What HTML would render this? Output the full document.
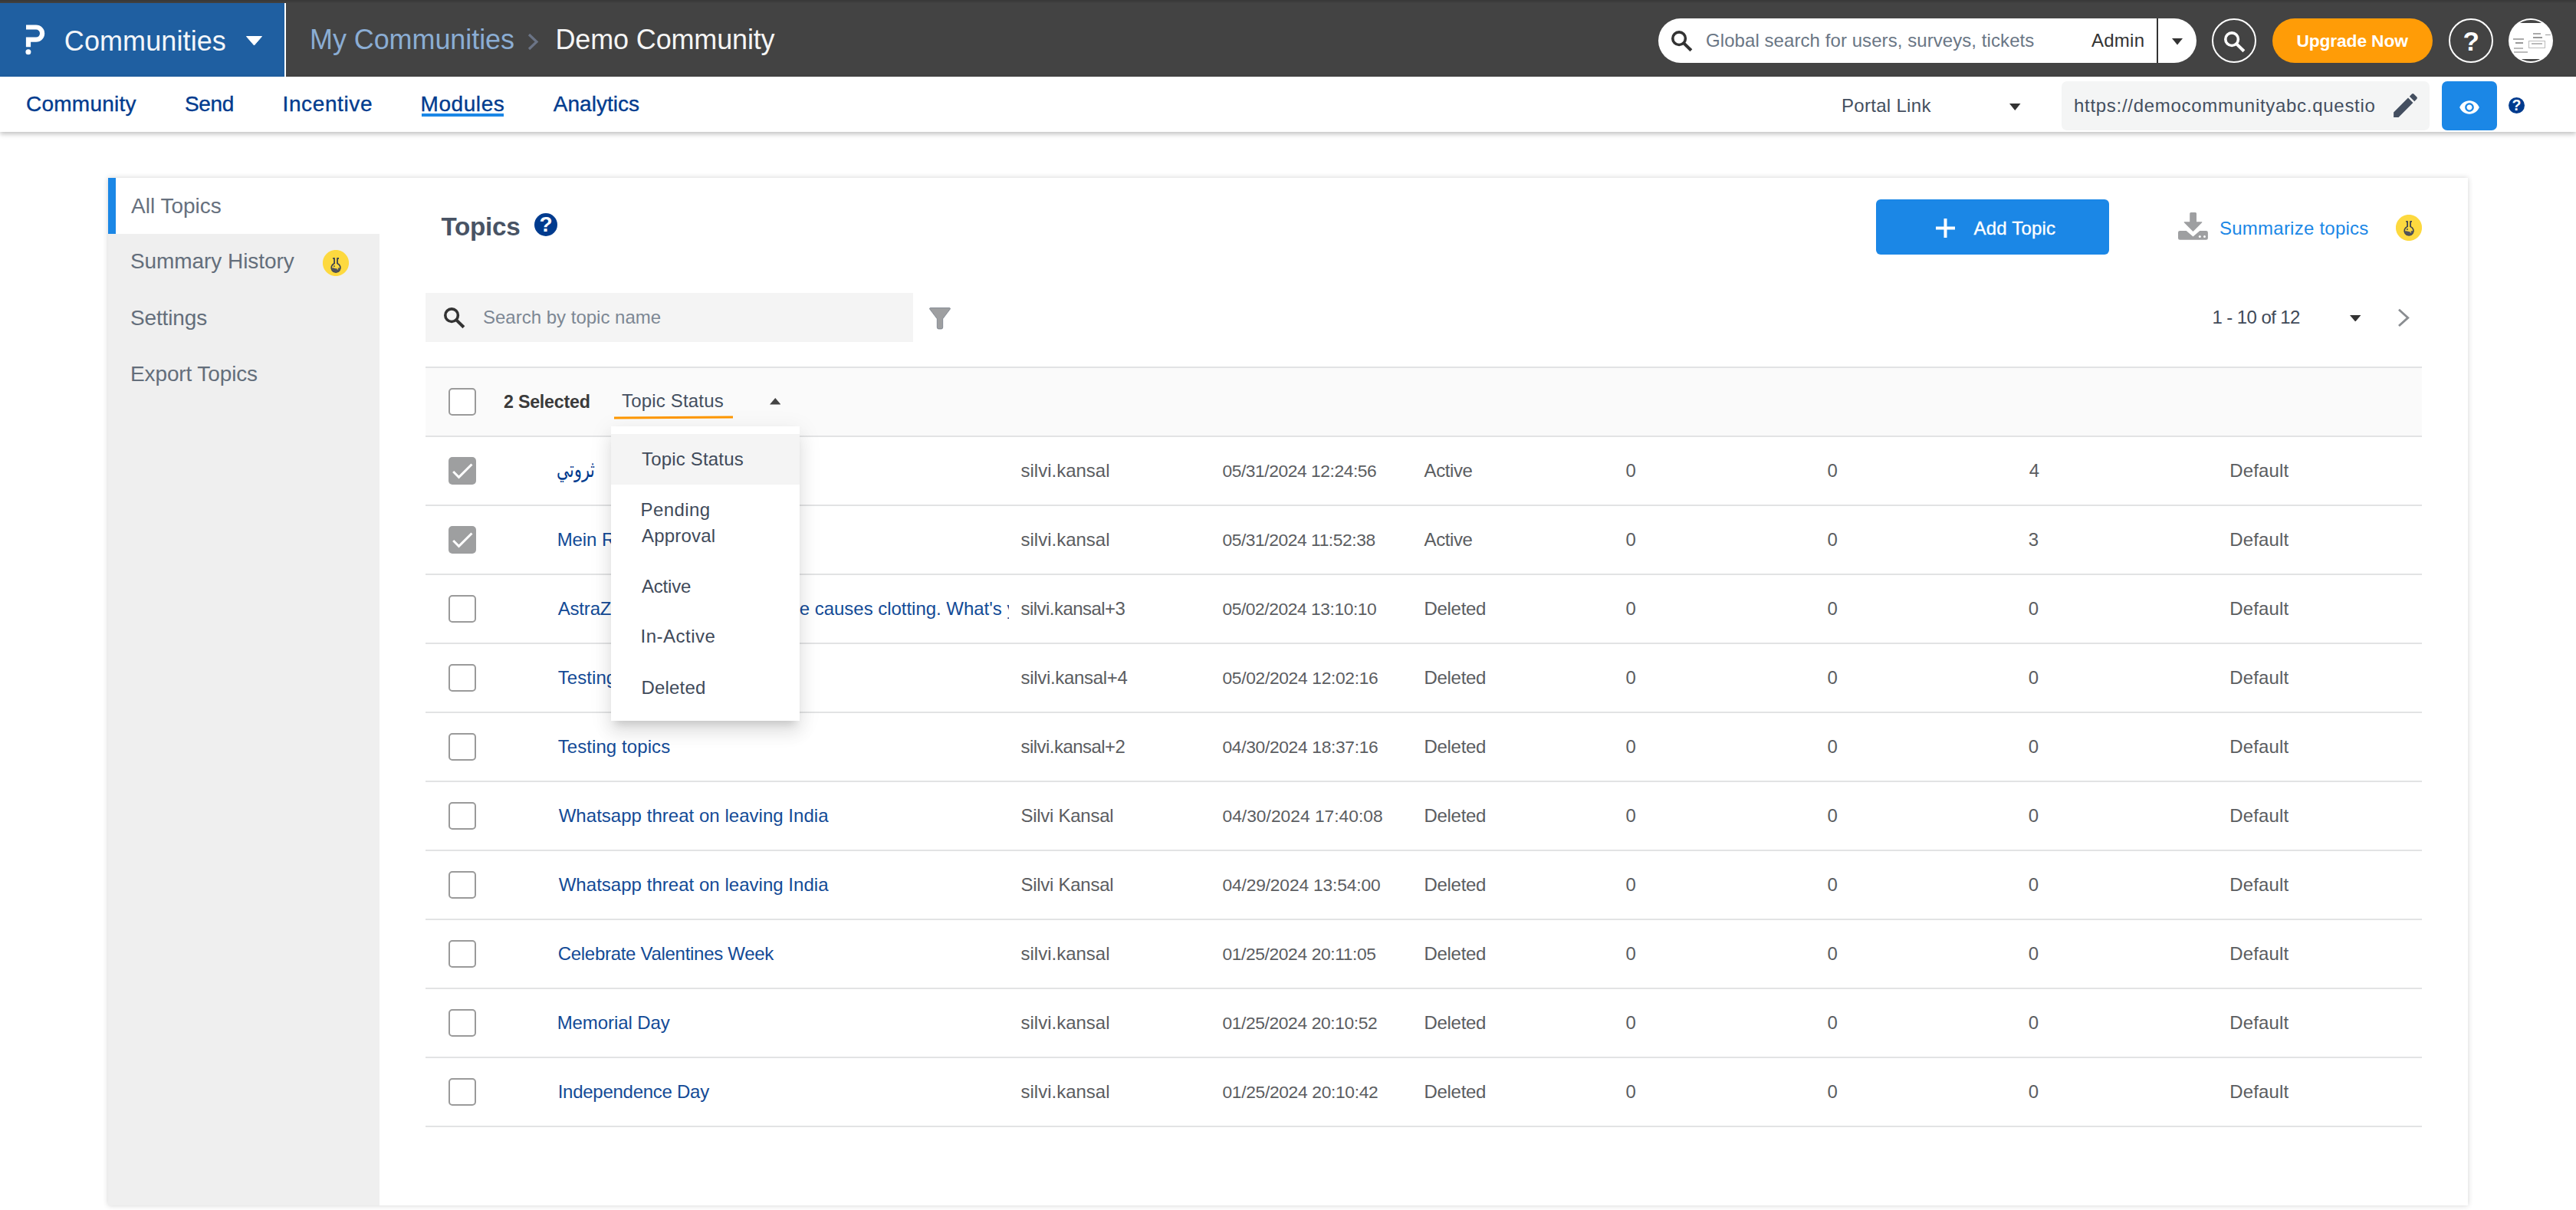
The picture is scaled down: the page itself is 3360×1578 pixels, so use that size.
<!DOCTYPE html>
<html lang="en"><head><meta charset="utf-8"><title>Topics - Demo Community</title><style>
*{margin:0;padding:0}
html,body{width:3360px;height:1578px;overflow:hidden;background:#fff}
@media (max-width:1700px){html{zoom:.5}}
body{position:relative;font-family:"Liberation Sans",sans-serif;font-size:24px;color:#444}
.a,.t{position:absolute;display:block}
.t{white-space:pre;line-height:1;font-weight:400;text-decoration:none}
h1.t{font-weight:700}
i{display:block}
.qc{background:#003b8e;border-radius:50%;color:#fff;font-weight:700;text-align:center}
.cb{width:36px;height:36px;box-sizing:border-box;border:2px solid #9a9a9a;border-radius:5px;background:#fff}
.cb.on{border:0;background:#9e9fa0}
.cb svg{display:block}
.clip{overflow:hidden}
.clip .t{position:absolute}
.ar{font-size:24px;line-height:1;text-decoration:none;white-space:nowrap;transform-origin:0 0;transform:scale(.85,1.2)}
</style></head>
<body>
<header>
<div class="a" style="left:0px;top:0px;width:3360px;height:100px;background:linear-gradient(#383838 0,#3c3c3c 2px,#434343 4px)"></div>
<div class="a" style="left:0px;top:4px;width:371px;height:96px;background:#1f5fa1"></div>
<div class="a" style="left:371px;top:4px;width:2px;height:96px;background:#fff"></div>
<svg class="a" style="left:30px;top:28px" width="34" height="46" viewBox="30 28 34 46" ><path d="M34 35.5H47A8.1 8.1 0 0 1 47 51.7H37V61.2" fill="none" stroke="#fff" stroke-width="6.2"/><circle cx="36.9" cy="67.7" r="3.5" fill="#fff"/></svg>
<span class="t" style="left:83.8px;top:36px;font-size:36.0px;letter-spacing:0.10px;opacity:0.95;color:#fff;">Communities</span>
<svg class="a" style="left:320px;top:47px" width="23" height="13" viewBox="0 0 23 13" ><path d="M1.5 0.5H21.5L11.5 12Z" fill="#fff" stroke="#fff" stroke-width="1" stroke-linejoin="round"/></svg>
<span class="t" style="left:404.0px;top:34px;font-size:36.0px;letter-spacing:-0.08px;opacity:0.95;color:#8fb3dc;">My Communities</span>
<svg class="a" style="left:686px;top:42px" width="18" height="26" viewBox="0 0 18 26" ><path d="M4 3 L14 12.5 L4 22" fill="none" stroke="#6b7486" stroke-width="3.2"/></svg>
<span class="t" style="left:724.5px;top:34px;font-size:36.0px;letter-spacing:-0.15px;opacity:0.95;color:#fff;">Demo Community</span>
<div class="a" style="left:2163px;top:24px;width:702px;height:58px;background:#fff;border-radius:29px"></div>
<svg class="a" style="left:2179.5px;top:40px" width="28" height="28" viewBox="0 0 28 28" ><circle cx="10.100" cy="10.200" r="8.300" fill="none" stroke="#333" stroke-width="3.600"/><path d="M15.300 15.400L25.900 25.800" stroke="#333" stroke-width="4.100"/></svg>
<span class="t" style="left:2225.0px;top:41px;font-size:24.0px;letter-spacing:0.07px;color:#6a7685;">Global search for users, surveys, tickets</span>
<span class="t" style="left:2728.0px;top:41px;font-size:24.0px;letter-spacing:0.25px;color:#333;">Admin</span>
<div class="a" style="left:2813px;top:24px;width:2px;height:58px;background:#333"></div>
<svg class="a" style="left:2833px;top:50px" width="14" height="8.5" viewBox="0 0 14 8.5" ><path d="M0 0H14L7.0 8.5Z" fill="#333"/></svg>
<div class="a" style="left:2885px;top:24px;width:58px;height:58px;border:2px solid #fff;border-radius:50%;box-sizing:border-box"></div>
<svg class="a" style="left:2901px;top:40.5px" width="28" height="28" viewBox="0 0 28 28" ><circle cx="10.100" cy="10.200" r="8.300" fill="none" stroke="#fff" stroke-width="3.600"/><path d="M15.300 15.400L25.900 25.800" stroke="#fff" stroke-width="4.100"/></svg>
<div class="a" style="left:2964px;top:24px;width:209px;height:58px;background:#ff9c07;border-radius:29px"></div>
<span class="t" style="left:2995.5px;top:42px;font-size:22.8px;font-weight:700;letter-spacing:-0.15px;color:#fff;">Upgrade Now</span>
<div class="a" style="left:3194px;top:24px;width:58px;height:58px;border:2px solid #fff;border-radius:50%;box-sizing:border-box"></div>
<span class="t" style="left:3212.5px;top:36px;font-size:35.0px;font-weight:700;color:#fff;">?</span>
<div class="a" style="left:3272px;top:24px;width:58px;height:58px;background:#fff;border-radius:50%"><div style="position:absolute;left:2px;top:2px;width:54px;height:54px;border-radius:50%;overflow:hidden;background:#fff"><i style="position:absolute;left:0;top:0;width:54px;height:3.500px;background:#444"></i><i style="position:absolute;left:0;top:50.500px;width:54px;height:3.500px;background:#444"></i><i style="position:absolute;left:30px;top:17px;width:10px;height:2px;background:#aaa"></i><i style="position:absolute;left:30px;top:22px;width:12px;height:2px;background:#999"></i><i style="position:absolute;left:4px;top:24px;width:14px;height:2px;background:#aaa"></i><i style="position:absolute;left:7px;top:29px;width:10px;height:2px;background:#999"></i><i style="position:absolute;left:24px;top:27px;width:22px;height:10px;border:1px solid #bbb;box-sizing:border-box"></i><i style="position:absolute;left:28px;top:30px;width:14px;height:2px;background:#bbb"></i><i style="position:absolute;left:5px;top:36px;width:12px;height:2px;background:#bbb"></i><i style="position:absolute;left:5px;top:41px;width:18px;height:2px;background:#bbb"></i><i style="position:absolute;left:46px;top:19px;width:8px;height:1px;background:#999"></i></div></div>
</header>
<nav>
<div class="a" style="left:0px;top:100px;width:3360px;height:72px;background:#fff;box-shadow:0 3px 6px rgba(0,0,0,.24)"></div>
<a class="t" style="left:34.0px;top:122px;font-size:28.0px;letter-spacing:0.25px;color:#003b8e;-webkit-text-stroke:0.35px currentColor;">Community</a>
<a class="t" style="left:241.0px;top:122px;font-size:28.0px;letter-spacing:-0.33px;color:#003b8e;-webkit-text-stroke:0.35px currentColor;">Send</a>
<a class="t" style="left:368.5px;top:122px;font-size:28.0px;letter-spacing:0.62px;color:#003b8e;-webkit-text-stroke:0.35px currentColor;">Incentive</a>
<a class="t" style="left:548.5px;top:122px;font-size:28.0px;letter-spacing:0.58px;color:#003b8e;-webkit-text-stroke:0.35px currentColor;">Modules</a>
<div class="a" style="left:550px;top:148px;width:107px;height:4px;background:#1b87e6"></div>
<a class="t" style="left:721.8px;top:122px;font-size:28.0px;letter-spacing:0.03px;color:#003b8e;-webkit-text-stroke:0.35px currentColor;">Analytics</a>
<span class="t" style="left:2402.0px;top:126px;font-size:24.0px;letter-spacing:0.30px;color:#444f60;">Portal Link</span>
<svg class="a" style="left:2621px;top:135px" width="14.5" height="9" viewBox="0 0 14.5 9" ><path d="M0 0H14.5L7.25 9Z" fill="#333"/></svg>
<div class="a" style="left:2689px;top:106px;width:480px;height:64px;background:#f4f5f5;border-radius:7px"></div>
<span class="t" style="left:2705.0px;top:126px;font-size:24.0px;letter-spacing:0.71px;color:#444f60;">https://democommunityabc.questio</span>
<svg class="a" style="left:3116.5px;top:117.2px" width="41" height="41" viewBox="0 0 24 24" ><path d="M3 17.25V21h3.75L17.81 9.94l-3.75-3.75L3 17.25zM20.71 7.04c.39-.39.39-1.02 0-1.41l-2.34-2.34c-.39-.39-1.02-.39-1.41 0l-1.83 1.83 3.75 3.75 1.83-1.83z" fill="#444f60"/></svg>
<div class="a" style="left:3185px;top:106px;width:72px;height:64px;background:#1b87e6;border-radius:7px"></div>
<svg class="a" style="left:3207.4px;top:126px" width="28" height="28" viewBox="0 0 24 24" ><path d="M12 4.5C7 4.5 2.73 7.61 1 12c1.73 4.39 6 7.5 11 7.5s9.27-3.11 11-7.5c-1.73-4.39-6-7.5-11-7.5zM12 17c-2.76 0-5-2.24-5-5s2.24-5 5-5 5 2.24 5 5-2.24 5-5 5zm0-8c-1.66 0-3 1.34-3 3s1.34 3 3 3 3-1.34 3-3-1.34-3-3-3z" fill="#fff"/></svg>
<div class="a qc" style="left:3272.0px;top:127.25px;width:21px;height:21px;line-height:21px;font-size:19.5px">?</div>
</nav>
<section>
<div class="a" style="left:141px;top:232px;width:3078px;height:1340px;background:#fff;box-shadow:0 0 7px rgba(0,0,0,.18)"></div>
<aside>
<div class="a" style="left:141px;top:305px;width:354px;height:1267px;background:#efefef"></div>
<div class="a" style="left:141px;top:232px;width:10px;height:73px;background:#1b87e6"></div>
<a class="t" style="left:171.0px;top:255px;font-size:28.0px;opacity:0.86;color:#4d5969;">All Topics</a>
<a class="t" style="left:170.0px;top:327px;font-size:28.0px;letter-spacing:-0.07px;opacity:0.86;color:#4d5969;">Summary History</a>
<svg class="a" style="left:421px;top:326px" width="34" height="34" viewBox="0 0 34 34" ><circle cx="17" cy="17" r="17.100" fill="#fdd93f"/><g transform="translate(0 10.3)"><path d="M15.100 0V7.800M19.050 0V7.800M13.200 .7H15.100M19.050 .7H21" stroke="#3e4450" stroke-width="1.800" fill="none"/><path d="M15.100 7.300A5.900 5.900 0 1 0 19.050 7.300" fill="none" stroke="#3e4450" stroke-width="1.700"/><path d="M11.200 13.400Q13.500 12.500 16 13.600T20.500 12.900L22.900 13.400A5.900 5.900 0 0 1 11.200 13.400Z" fill="#50535a"/><circle cx="14.900" cy="10.800" r=".95" fill="#3e4450"/><circle cx="19.300" cy="14.400" r=".9" fill="#fdd93f"/></g></svg>
<a class="t" style="left:170.0px;top:401px;font-size:28.0px;letter-spacing:-0.14px;opacity:0.86;color:#4d5969;">Settings</a>
<a class="t" style="left:170.0px;top:474px;font-size:28.0px;letter-spacing:-0.12px;opacity:0.86;color:#4d5969;">Export Topics</a>
</aside>
<main>
<h1 class="t" style="left:575.5px;top:279px;font-size:33.25px;font-weight:700;letter-spacing:-0.30px;color:#485364;">Topics</h1>
<div class="a qc" style="left:697.0px;top:278.0px;width:30px;height:30px;line-height:30px;font-size:28px">?</div>
<div class="a" style="left:2447px;top:260px;width:304px;height:72px;background:#1b87e6;border-radius:6px"></div>
<svg class="a" style="left:2525px;top:285px" width="25" height="25" viewBox="0 0 25 25" ><path d="M12.5 0V25M0 12.5H25" stroke="#fff" stroke-width="4"/></svg>
<span class="t" style="left:2574.5px;top:286px;font-size:24.0px;letter-spacing:0.19px;color:#fff;-webkit-text-stroke:0.35px currentColor;">Add Topic</span>
<svg class="a" style="left:2840px;top:276px" width="41" height="38" viewBox="2840 276 41 38" ><path d="M2856.200 278.400a1.500 1.500 0 0 1 1.500-1.500h5.800a1.500 1.500 0 0 1 1.500 1.500V289.200H2871.800a.6.6 0 0 1 .4 1L2861 301.400a.7.7 0 0 1-1 0L2848.800 290.200a.6.6 0 0 1 .4-1H2856.200Z" fill="#9e9fa1"/><path d="M2843.300 301H2851.700L2860.500 308.400L2869.300 301H2877.600a2.300 2.300 0 0 1 2.300 2.300V310.500a2.300 2.300 0 0 1-2.300 2.300H2843.300a2.300 2.300 0 0 1-2.300-2.300V303.300a2.300 2.300 0 0 1 2.300-2.300Z" fill="#9e9fa1"/><circle cx="2869.300" cy="308.600" r="1.500" fill="#fff"/><circle cx="2875.500" cy="308.600" r="1.500" fill="#fff"/></svg>
<a class="t" style="left:2895.0px;top:286px;font-size:24.0px;letter-spacing:0.24px;color:#1b87e6;">Summarize topics</a>
<svg class="a" style="left:3125px;top:280px" width="34" height="34" viewBox="0 0 34 34" ><circle cx="17" cy="17" r="17.100" fill="#fdd93f"/><g transform="translate(0 8.2)"><path d="M15.100 0V7.800M19.050 0V7.800M13.200 .7H15.100M19.050 .7H21" stroke="#3e4450" stroke-width="1.800" fill="none"/><path d="M15.100 7.300A5.900 5.900 0 1 0 19.050 7.300" fill="none" stroke="#3e4450" stroke-width="1.700"/><path d="M11.200 13.400Q13.500 12.500 16 13.600T20.500 12.900L22.900 13.400A5.900 5.900 0 0 1 11.200 13.400Z" fill="#50535a"/><circle cx="14.900" cy="10.800" r=".95" fill="#3e4450"/><circle cx="19.300" cy="14.400" r=".9" fill="#fdd93f"/></g></svg>
<div class="a" style="left:555px;top:382px;width:636px;height:64px;background:#f4f4f4"></div>
<svg class="a" style="left:578.75px;top:400.5px" width="28" height="28" viewBox="0 0 28 28" ><circle cx="10.100" cy="10.200" r="8.300" fill="none" stroke="#333" stroke-width="3.600"/><path d="M15.300 15.400L25.900 25.800" stroke="#333" stroke-width="4.100"/></svg>
<span class="t" style="left:630.0px;top:402px;font-size:24.0px;opacity:0.86;color:#6a7685;">Search by topic name</span>
<svg class="a" style="left:1211px;top:400px" width="30" height="30" viewBox="0 0 30 30" ><path d="M2.500 1.500H27.500a1 1 0 0 1 .8 1.600L18.700 15.800V27a2 2 0 0 1-2 2h-3.400a2 2 0 0 1-2-2V15.800L1.700 3.100a1 1 0 0 1 .8-1.600z" fill="#9e9fa1" stroke="#6a7380" stroke-width=".7"/></svg>
<span class="t" style="left:2885.5px;top:402px;font-size:24.0px;letter-spacing:-0.59px;color:#3f4958;">1 - 10 of 12</span>
<svg class="a" style="left:3064.5px;top:410.5px" width="14.5" height="8.5" viewBox="0 0 14.5 8.5" ><path d="M0 0H14.5L7.25 8.5Z" fill="#333"/></svg>
<svg class="a" style="left:3124px;top:400px" width="24" height="30" viewBox="0 0 24 30" ><path d="M5 3.800 L16.800 14.400 L5 25" fill="none" stroke="#8a8d91" stroke-width="2.800"/></svg>
<div class="a" style="left:555px;top:478px;width:2604px;height:2px;background:#e2e3e4"></div>
<div class="a" style="left:555px;top:480px;width:2604px;height:88px;background:#fafafa"></div>
<div class="a" style="left:555px;top:568px;width:2604px;height:2px;background:#e2e3e4"></div>
<span class="a cb" style="left:585px;top:506px"></span>
<span class="t" style="left:657.0px;top:513px;font-size:23.28px;font-weight:700;letter-spacing:-0.25px;color:#3a3a3a;">2 Selected</span>
<span class="t" style="left:811.0px;top:511px;font-size:24.0px;letter-spacing:0.18px;color:#444f60;">Topic Status</span>
<div class="a" style="left:801px;top:543px;width:155px;height:3.2px;background:#ff9800;transform:skewY(-.45deg)"></div>
<svg class="a" style="left:1003.75px;top:519px" width="14.5" height="8.5" viewBox="0 0 14.5 8.5" ><path d="M0 8.5H14.5L7.25 0Z" fill="#444"/></svg>
<div class="row">
<span class="a cb on" style="left:585px;top:596px"><svg width="36" height="36" viewBox="0 0 24 24"><path d="M9 16.17L4.83 12l-1.42 1.41L9 19 21 7l-1.41-1.41z" fill="#fff"/></svg></span>
<a class="a ar" style="left:726.2px;top:598.4px;color:#003b8e" dir="rtl">ثروتي</a>
<span class="t" style="left:1331.5px;top:602px;font-size:24.0px;opacity:0.86;color:#414347;">silvi.kansal</span>
<span class="t" style="left:1594.5px;top:603px;font-size:22.8px;letter-spacing:-0.44px;opacity:0.86;color:#414347;">05/31/2024 12:24:56</span>
<span class="t" style="left:1857.6px;top:602px;font-size:24.0px;letter-spacing:-0.40px;opacity:0.86;color:#414347;">Active</span>
<span class="t" style="left:2120.6px;top:602px;font-size:24.0px;opacity:0.86;color:#414347;">0</span>
<span class="t" style="left:2383.6px;top:602px;font-size:24.0px;opacity:0.86;color:#414347;">0</span>
<span class="t" style="left:2646.8px;top:602px;font-size:24.0px;opacity:0.86;color:#414347;">4</span>
<span class="t" style="left:2908.2px;top:602px;font-size:24.0px;letter-spacing:0.17px;opacity:0.86;color:#414347;">Default</span>
<div class="a" style="left:555px;top:658px;width:2604px;height:2px;background:#e2e3e4"></div>
</div>
<div class="row">
<span class="a cb on" style="left:585px;top:686px"><svg width="36" height="36" viewBox="0 0 24 24"><path d="M9 16.17L4.83 12l-1.42 1.41L9 19 21 7l-1.41-1.41z" fill="#fff"/></svg></span>
<a class="t" style="left:726.7px;top:692px;font-size:24.0px;letter-spacing:-0.08px;opacity:0.92;color:#003b8e;">Mein Reichtum</a>
<span class="t" style="left:1331.5px;top:692px;font-size:24.0px;opacity:0.86;color:#414347;">silvi.kansal</span>
<span class="t" style="left:1594.5px;top:693px;font-size:22.8px;letter-spacing:-0.44px;opacity:0.86;color:#414347;">05/31/2024 11:52:38</span>
<span class="t" style="left:1857.6px;top:692px;font-size:24.0px;letter-spacing:-0.40px;opacity:0.86;color:#414347;">Active</span>
<span class="t" style="left:2120.6px;top:692px;font-size:24.0px;opacity:0.86;color:#414347;">0</span>
<span class="t" style="left:2383.6px;top:692px;font-size:24.0px;opacity:0.86;color:#414347;">0</span>
<span class="t" style="left:2645.8px;top:692px;font-size:24.0px;opacity:0.86;color:#414347;">3</span>
<span class="t" style="left:2908.2px;top:692px;font-size:24.0px;letter-spacing:0.17px;opacity:0.86;color:#414347;">Default</span>
<div class="a" style="left:555px;top:748px;width:2604px;height:2px;background:#e2e3e4"></div>
</div>
<div class="row">
<span class="a cb" style="left:585px;top:776px"></span>
<a class="a clip" style="left:700px;top:760px;width:616px;height:68px">
<span class="t" style="left:727.7px;top:782px;font-size:24.0px;letter-spacing:-0.18px;opacity:0.92;color:#003b8e;margin-left:-700px;margin-top:-760px;">AstraZeneca admits its vaccin</span>
<span class="t" style="left:1042.8px;top:782px;font-size:24.0px;letter-spacing:-0.03px;opacity:0.92;color:#003b8e;margin-left:-700px;margin-top:-760px;">e causes clotting. What's your opinion?</span>
</a>
<span class="t" style="left:1331.5px;top:782px;font-size:24.0px;letter-spacing:-0.54px;opacity:0.86;color:#414347;">silvi.kansal+3</span>
<span class="t" style="left:1594.5px;top:783px;font-size:22.8px;letter-spacing:-0.44px;opacity:0.86;color:#414347;">05/02/2024 13:10:10</span>
<span class="t" style="left:1857.6px;top:782px;font-size:24.0px;letter-spacing:-0.33px;opacity:0.86;color:#414347;">Deleted</span>
<span class="t" style="left:2120.6px;top:782px;font-size:24.0px;opacity:0.86;color:#414347;">0</span>
<span class="t" style="left:2383.6px;top:782px;font-size:24.0px;opacity:0.86;color:#414347;">0</span>
<span class="t" style="left:2645.8px;top:782px;font-size:24.0px;opacity:0.86;color:#414347;">0</span>
<span class="t" style="left:2908.2px;top:782px;font-size:24.0px;letter-spacing:0.17px;opacity:0.86;color:#414347;">Default</span>
<div class="a" style="left:555px;top:838px;width:2604px;height:2px;background:#e2e3e4"></div>
</div>
<div class="row">
<span class="a cb" style="left:585px;top:866px"></span>
<a class="t" style="left:727.7px;top:872px;font-size:24.0px;letter-spacing:0.08px;opacity:0.92;color:#003b8e;">Testing topics</a>
<span class="t" style="left:1331.5px;top:872px;font-size:24.0px;letter-spacing:-0.31px;opacity:0.86;color:#414347;">silvi.kansal+4</span>
<span class="t" style="left:1594.5px;top:873px;font-size:22.8px;letter-spacing:-0.33px;opacity:0.86;color:#414347;">05/02/2024 12:02:16</span>
<span class="t" style="left:1857.6px;top:872px;font-size:24.0px;letter-spacing:-0.33px;opacity:0.86;color:#414347;">Deleted</span>
<span class="t" style="left:2120.6px;top:872px;font-size:24.0px;opacity:0.86;color:#414347;">0</span>
<span class="t" style="left:2383.6px;top:872px;font-size:24.0px;opacity:0.86;color:#414347;">0</span>
<span class="t" style="left:2645.8px;top:872px;font-size:24.0px;opacity:0.86;color:#414347;">0</span>
<span class="t" style="left:2908.2px;top:872px;font-size:24.0px;letter-spacing:0.17px;opacity:0.86;color:#414347;">Default</span>
<div class="a" style="left:555px;top:928px;width:2604px;height:2px;background:#e2e3e4"></div>
</div>
<div class="row">
<span class="a cb" style="left:585px;top:956px"></span>
<a class="t" style="left:727.7px;top:962px;font-size:24.0px;letter-spacing:0.08px;opacity:0.92;color:#003b8e;">Testing topics</a>
<span class="t" style="left:1331.5px;top:962px;font-size:24.0px;letter-spacing:-0.54px;opacity:0.86;color:#414347;">silvi.kansal+2</span>
<span class="t" style="left:1594.5px;top:963px;font-size:22.8px;letter-spacing:-0.33px;opacity:0.86;color:#414347;">04/30/2024 18:37:16</span>
<span class="t" style="left:1857.6px;top:962px;font-size:24.0px;letter-spacing:-0.33px;opacity:0.86;color:#414347;">Deleted</span>
<span class="t" style="left:2120.6px;top:962px;font-size:24.0px;opacity:0.86;color:#414347;">0</span>
<span class="t" style="left:2383.6px;top:962px;font-size:24.0px;opacity:0.86;color:#414347;">0</span>
<span class="t" style="left:2645.8px;top:962px;font-size:24.0px;opacity:0.86;color:#414347;">0</span>
<span class="t" style="left:2908.2px;top:962px;font-size:24.0px;letter-spacing:0.17px;opacity:0.86;color:#414347;">Default</span>
<div class="a" style="left:555px;top:1018px;width:2604px;height:2px;background:#e2e3e4"></div>
</div>
<div class="row">
<span class="a cb" style="left:585px;top:1046px"></span>
<a class="t" style="left:728.7px;top:1052px;font-size:24.0px;letter-spacing:0.03px;opacity:0.92;color:#003b8e;">Whatsapp threat on leaving India</a>
<span class="t" style="left:1331.5px;top:1052px;font-size:24.0px;letter-spacing:-0.27px;opacity:0.86;color:#414347;">Silvi Kansal</span>
<span class="t" style="left:1594.5px;top:1053px;font-size:22.8px;opacity:0.86;color:#414347;">04/30/2024 17:40:08</span>
<span class="t" style="left:1857.6px;top:1052px;font-size:24.0px;letter-spacing:-0.33px;opacity:0.86;color:#414347;">Deleted</span>
<span class="t" style="left:2120.6px;top:1052px;font-size:24.0px;opacity:0.86;color:#414347;">0</span>
<span class="t" style="left:2383.6px;top:1052px;font-size:24.0px;opacity:0.86;color:#414347;">0</span>
<span class="t" style="left:2645.8px;top:1052px;font-size:24.0px;opacity:0.86;color:#414347;">0</span>
<span class="t" style="left:2908.2px;top:1052px;font-size:24.0px;letter-spacing:0.17px;opacity:0.86;color:#414347;">Default</span>
<div class="a" style="left:555px;top:1108px;width:2604px;height:2px;background:#e2e3e4"></div>
</div>
<div class="row">
<span class="a cb" style="left:585px;top:1136px"></span>
<a class="t" style="left:728.7px;top:1142px;font-size:24.0px;letter-spacing:0.03px;opacity:0.92;color:#003b8e;">Whatsapp threat on leaving India</a>
<span class="t" style="left:1331.5px;top:1142px;font-size:24.0px;letter-spacing:-0.27px;opacity:0.86;color:#414347;">Silvi Kansal</span>
<span class="t" style="left:1594.5px;top:1143px;font-size:22.8px;letter-spacing:-0.17px;opacity:0.86;color:#414347;">04/29/2024 13:54:00</span>
<span class="t" style="left:1857.6px;top:1142px;font-size:24.0px;letter-spacing:-0.33px;opacity:0.86;color:#414347;">Deleted</span>
<span class="t" style="left:2120.6px;top:1142px;font-size:24.0px;opacity:0.86;color:#414347;">0</span>
<span class="t" style="left:2383.6px;top:1142px;font-size:24.0px;opacity:0.86;color:#414347;">0</span>
<span class="t" style="left:2645.8px;top:1142px;font-size:24.0px;opacity:0.86;color:#414347;">0</span>
<span class="t" style="left:2908.2px;top:1142px;font-size:24.0px;letter-spacing:0.17px;opacity:0.86;color:#414347;">Default</span>
<div class="a" style="left:555px;top:1198px;width:2604px;height:2px;background:#e2e3e4"></div>
</div>
<div class="row">
<span class="a cb" style="left:585px;top:1226px"></span>
<a class="t" style="left:727.7px;top:1232px;font-size:24.0px;letter-spacing:-0.29px;opacity:0.92;color:#003b8e;">Celebrate Valentines Week</a>
<span class="t" style="left:1331.5px;top:1232px;font-size:24.0px;opacity:0.86;color:#414347;">silvi.kansal</span>
<span class="t" style="left:1594.5px;top:1233px;font-size:22.8px;letter-spacing:-0.39px;opacity:0.86;color:#414347;">01/25/2024 20:11:05</span>
<span class="t" style="left:1857.6px;top:1232px;font-size:24.0px;letter-spacing:-0.33px;opacity:0.86;color:#414347;">Deleted</span>
<span class="t" style="left:2120.6px;top:1232px;font-size:24.0px;opacity:0.86;color:#414347;">0</span>
<span class="t" style="left:2383.6px;top:1232px;font-size:24.0px;opacity:0.86;color:#414347;">0</span>
<span class="t" style="left:2645.8px;top:1232px;font-size:24.0px;opacity:0.86;color:#414347;">0</span>
<span class="t" style="left:2908.2px;top:1232px;font-size:24.0px;letter-spacing:0.17px;opacity:0.86;color:#414347;">Default</span>
<div class="a" style="left:555px;top:1288px;width:2604px;height:2px;background:#e2e3e4"></div>
</div>
<div class="row">
<span class="a cb" style="left:585px;top:1316px"></span>
<a class="t" style="left:726.7px;top:1322px;font-size:24.0px;letter-spacing:-0.09px;opacity:0.92;color:#003b8e;">Memorial Day</a>
<span class="t" style="left:1331.5px;top:1322px;font-size:24.0px;opacity:0.86;color:#414347;">silvi.kansal</span>
<span class="t" style="left:1594.5px;top:1323px;font-size:22.8px;letter-spacing:-0.39px;opacity:0.86;color:#414347;">01/25/2024 20:10:52</span>
<span class="t" style="left:1857.6px;top:1322px;font-size:24.0px;letter-spacing:-0.33px;opacity:0.86;color:#414347;">Deleted</span>
<span class="t" style="left:2120.6px;top:1322px;font-size:24.0px;opacity:0.86;color:#414347;">0</span>
<span class="t" style="left:2383.6px;top:1322px;font-size:24.0px;opacity:0.86;color:#414347;">0</span>
<span class="t" style="left:2645.8px;top:1322px;font-size:24.0px;opacity:0.86;color:#414347;">0</span>
<span class="t" style="left:2908.2px;top:1322px;font-size:24.0px;letter-spacing:0.17px;opacity:0.86;color:#414347;">Default</span>
<div class="a" style="left:555px;top:1378px;width:2604px;height:2px;background:#e2e3e4"></div>
</div>
<div class="row">
<span class="a cb" style="left:585px;top:1406px"></span>
<a class="t" style="left:727.7px;top:1412px;font-size:24.0px;letter-spacing:-0.27px;opacity:0.92;color:#003b8e;">Independence Day</a>
<span class="t" style="left:1331.5px;top:1412px;font-size:24.0px;opacity:0.86;color:#414347;">silvi.kansal</span>
<span class="t" style="left:1594.5px;top:1413px;font-size:22.8px;letter-spacing:-0.33px;opacity:0.86;color:#414347;">01/25/2024 20:10:42</span>
<span class="t" style="left:1857.6px;top:1412px;font-size:24.0px;letter-spacing:-0.33px;opacity:0.86;color:#414347;">Deleted</span>
<span class="t" style="left:2120.6px;top:1412px;font-size:24.0px;opacity:0.86;color:#414347;">0</span>
<span class="t" style="left:2383.6px;top:1412px;font-size:24.0px;opacity:0.86;color:#414347;">0</span>
<span class="t" style="left:2645.8px;top:1412px;font-size:24.0px;opacity:0.86;color:#414347;">0</span>
<span class="t" style="left:2908.2px;top:1412px;font-size:24.0px;letter-spacing:0.17px;opacity:0.86;color:#414347;">Default</span>
<div class="a" style="left:555px;top:1468px;width:2604px;height:2px;background:#e2e3e4"></div>
</div>
<div class="a" style="left:797px;top:556px;width:246px;height:384px;background:#fff;box-shadow:0 10px 10px -6px rgba(0,0,0,.13),0 16px 20px 2px rgba(0,0,0,.07),0 6px 28px 4px rgba(0,0,0,.06)"></div>
<div class="a" style="left:797px;top:566px;width:246px;height:66px;background:#f4f4f4"></div>
<span class="t" style="left:837.0px;top:587px;font-size:24.0px;letter-spacing:0.18px;color:#3f4a5a;">Topic Status</span>
<span class="t" style="left:835.5px;top:653px;font-size:24.0px;letter-spacing:0.42px;color:#3f4a5a;">Pending</span>
<span class="t" style="left:837.0px;top:687px;font-size:24.0px;letter-spacing:0.21px;color:#3f4a5a;">Approval</span>
<span class="t" style="left:837.0px;top:753px;font-size:24.0px;letter-spacing:-0.20px;color:#3f4a5a;">Active</span>
<span class="t" style="left:835.5px;top:818px;font-size:24.0px;letter-spacing:0.50px;color:#3f4a5a;">In-Active</span>
<span class="t" style="left:836.5px;top:885px;font-size:24.0px;letter-spacing:0.18px;color:#3f4a5a;">Deleted</span>
</main>
</section>
</body></html>
